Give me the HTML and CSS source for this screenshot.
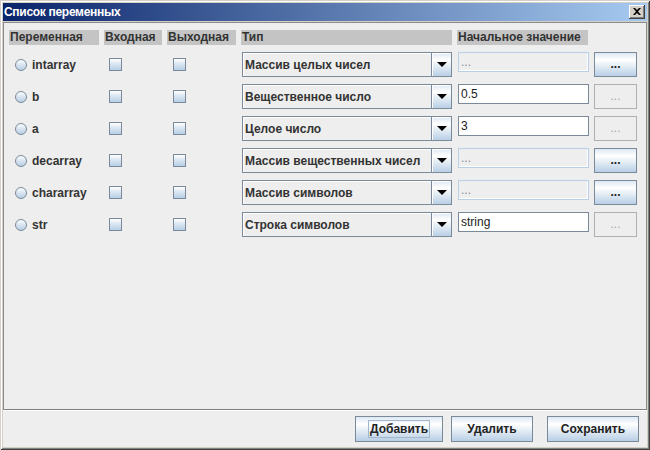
FILE: index.html
```html
<!DOCTYPE html>
<html>
<head>
<meta charset="utf-8">
<link rel="stylesheet" href="styles.css">
</head>
<body>
<div class="window">
  <div class="titlebar">
    <span class="title">Список переменных</span>
    <div class="close">
      <svg width="8" height="7" viewBox="0 0 8 7"><path d="M0 0h2l2 2 2-2h2L5 3.5 8 7H6L4 5 2 7H0l3-3.5z" fill="#000"/></svg>
    </div>
  </div>
  <div class="content">
    <div class="panel">
      <div class="grid">
        <div class="hdr">Переменная</div>
        <div class="hdr">Входная</div>
        <div class="hdr">Выходная</div>
        <div class="hdr">Тип</div>
        <div class="hdr">Начальное значение</div>
        <div></div>

        <div class="var"><span class="radio"></span>intarray</div>
        <div class="chk"><span class="box"></span></div>
        <div class="chk out"><span class="box"></span></div>
        <div class="combo"><div class="combo-text">Массив целых чисел</div><div class="combo-btn"><span class="arrow"></span></div></div>
        <div class="field disabled">...</div>
        <div class="dots">...</div>

        <div class="var"><span class="radio"></span>b</div>
        <div class="chk"><span class="box"></span></div>
        <div class="chk out"><span class="box"></span></div>
        <div class="combo"><div class="combo-text">Вещественное число</div><div class="combo-btn"><span class="arrow"></span></div></div>
        <div class="field">0.5</div>
        <div class="dots disabled">...</div>

        <div class="var"><span class="radio"></span>a</div>
        <div class="chk"><span class="box"></span></div>
        <div class="chk out"><span class="box"></span></div>
        <div class="combo"><div class="combo-text">Целое число</div><div class="combo-btn"><span class="arrow"></span></div></div>
        <div class="field">3</div>
        <div class="dots disabled">...</div>

        <div class="var"><span class="radio"></span>decarray</div>
        <div class="chk"><span class="box"></span></div>
        <div class="chk out"><span class="box"></span></div>
        <div class="combo"><div class="combo-text">Массив вещественных чисел</div><div class="combo-btn"><span class="arrow"></span></div></div>
        <div class="field disabled">...</div>
        <div class="dots">...</div>

        <div class="var"><span class="radio"></span>chararray</div>
        <div class="chk"><span class="box"></span></div>
        <div class="chk out"><span class="box"></span></div>
        <div class="combo"><div class="combo-text">Массив символов</div><div class="combo-btn"><span class="arrow"></span></div></div>
        <div class="field disabled">...</div>
        <div class="dots">...</div>

        <div class="var"><span class="radio"></span>str</div>
        <div class="chk"><span class="box"></span></div>
        <div class="chk out"><span class="box"></span></div>
        <div class="combo"><div class="combo-text">Строка символов</div><div class="combo-btn"><span class="arrow"></span></div></div>
        <div class="field">string</div>
        <div class="dots disabled">...</div>
      </div>
    </div>
    <div class="buttons">
      <div class="btn add"><span class="focus">Добавить</span></div>
      <div class="btn del">Удалить</div>
      <div class="btn save">Сохранить</div>
    </div>
  </div>
</div>
</body>
</html>
```

FILE: styles.css
```css
* { box-sizing: border-box; }
html, body { margin: 0; padding: 0; background: #d4d0c8; }
body { font-family: "Liberation Sans", Arial, sans-serif; }

.window {
  width: 650px;
  height: 450px;
  padding: 3px;
  background: #d4d0c8;
  box-shadow: inset 1px 1px #d4d0c8, inset -1px -1px #404040, inset 2px 2px #ffffff, inset -2px -2px #808080;
  display: flex;
  flex-direction: column;
}

.titlebar {
  height: 18px;
  background: linear-gradient(to right, #0a246a, #a6caf0);
  display: flex;
  align-items: center;
  justify-content: space-between;
  padding: 0 2px 0 1px;
}
.title {
  color: #fff;
  font-weight: bold;
  font-size: 12px;
  letter-spacing: -0.3px;
}
.close {
  width: 16px;
  height: 14px;
  background: #d4d0c8;
  box-shadow: inset -1px -1px #404040, inset 1px 1px #ffffff, inset -2px -2px #808080;
  display: flex;
  align-items: center;
  justify-content: center;
  padding-bottom: 1px;
}

.content {
  flex: 1;
  margin-top: 1px;
  background: #eeeeee;
  display: flex;
  flex-direction: column;
}

.panel {
  height: 388px;
  border: 1px solid #8c8c8c;
  border-bottom-color: #7f7f7f;
  box-shadow: 0 1px #ffffff;
}

.grid {
  display: grid;
  grid-template-columns: 90px 58px 69px 211px 132px 43px;
  grid-auto-rows: 25px;
  grid-template-rows: 15px;
  column-gap: 5px;
  row-gap: 7px;
  padding: 7px 0 0 5px;
  font-size: 12px;
  font-weight: bold;
  color: #333333;
}

.hdr {
  background: #c4c4c4;
  height: 15px;
  line-height: 15px;
  padding-left: 1px;
}
.grid > .hdr:nth-child(5) { margin-right: 1px; }

.var {
  display: flex;
  align-items: center;
  padding-left: 6px;
  gap: 5px;
}
.radio {
  width: 12px;
  height: 12px;
  border: 1px solid #7a8a99;
  border-radius: 50%;
  background: linear-gradient(#ffffff, #dde8f3 40%, #b8cfe5);
}

.chk {
  display: flex;
  align-items: center;
  padding-left: 5px;
  padding-bottom: 1px;
}
.chk.out { padding-left: 6px; }
.box {
  width: 13px;
  height: 13px;
  border: 1px solid #7a8a99;
  background: linear-gradient(#ffffff, #dde8f3 40%, #b8cfe5);
}

.combo {
  display: flex;
  margin-left: 1px;
  width: 210px;
  border: 1px solid #7a8a99;
  background: #eeeeee;
}
.combo-text {
  flex: 1;
  display: flex;
  align-items: center;
  padding-left: 2px;
  box-shadow: inset 1px 1px #ffffff;
}
.combo-btn {
  width: 20px;
  border-left: 1px solid #7a8a99;
  background: linear-gradient(#dde8f3, #ffffff 30%, #b8cfe5);
  display: flex;
  align-items: center;
  justify-content: center;
  box-shadow: inset 1px 1px #ffffff;
}
.arrow {
  width: 0;
  height: 0;
  border-top: 5px solid #000;
  border-left: 5px solid transparent;
  border-right: 5px solid transparent;
}

.field {
  align-self: start;
  height: 20px;
  width: 131px;
  margin-left: 1px;
  border: 1px solid #7a8a99;
  background: #ffffff;
  font-weight: normal;
  font-size: 12px;
  color: #222;
  line-height: 18px;
  padding-left: 2px;
  box-shadow: inset -1px -1px #ffffff;
}
.field.disabled {
  border-color: #b8cfe5;
  background: #eeeeee;
  color: #8a8a8a;
}

.dots {
  border: 1px solid #7a8a99;
  background: linear-gradient(#dde8f3, #ffffff 30%, #b8cfe5);
  display: flex;
  align-items: center;
  justify-content: center;
  padding-bottom: 2px;
  color: #222;
}
.dots.disabled {
  border-color: #b0b0b0;
  background: #eeeeee;
  color: #a8a8a8;
  font-weight: normal;
}

.buttons {
  flex: 1;
  display: flex;
  justify-content: flex-end;
  align-items: flex-start;
  padding-top: 6px;
  padding-right: 8px;
}
.btn {
  height: 26px;
  border: 1px solid #7a8a99;
  background: linear-gradient(#dde8f3, #ffffff 30%, #b8cfe5);
  display: flex;
  align-items: center;
  justify-content: center;
  font-size: 12px;
  font-weight: bold;
  color: #222;
}
.add { width: 88px; }
.del { width: 82px; margin-left: 8px; }
.save { width: 92px; margin-left: 14px; }
.focus {
  border: 1px solid #a3b8cc;
  padding: 1px 1px;
  line-height: 14px;
}
```
